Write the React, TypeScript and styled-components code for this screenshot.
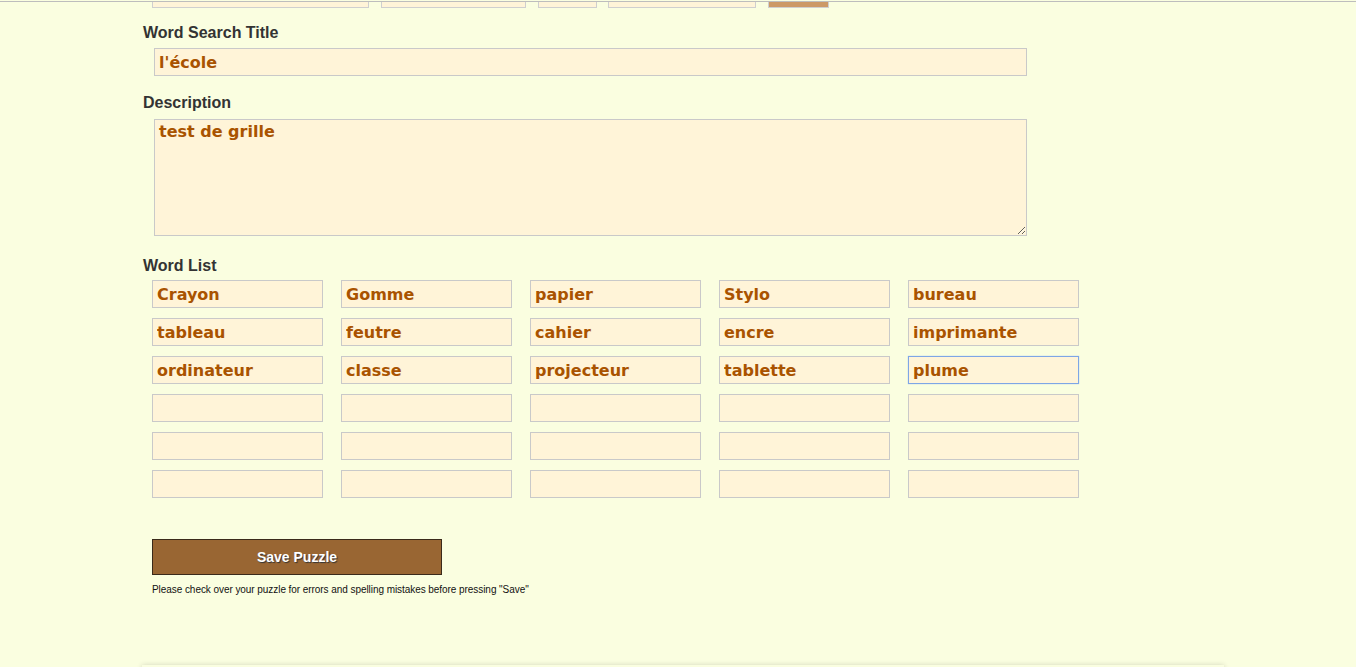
import React from "react";
import styled, { createGlobalStyle } from "styled-components";

const Global = createGlobalStyle`
  html, body { margin: 0; padding: 0; background: #fafee0; }
  body { font-family: "Liberation Sans", Arial, sans-serif; color: #333; overflow: hidden; }
`;

const TopLine = styled.div`
  margin-top: 1px;
  border-top: 1px solid #bdbdbd;
`;

const Page = styled.div`
  padding-left: 143px;
`;

const TopRow = styled.div`
  display: flex;
  padding-left: 9px;
  height: 6px;
`;

const Stub = styled.div<{ $w: number; $ml: number }>`
  width: ${(p) => p.$w}px;
  margin-left: ${(p) => p.$ml}px;
  box-sizing: border-box;
  background: #fff4d8;
  border: 1px solid #cfcfcf;
  border-top: none;
`;

const StubButton = styled.div`
  width: 61px;
  margin-left: 12px;
  box-sizing: border-box;
  background: #cc9966;
  border: 1px solid #cfcfcf;
  border-top: none;
`;

const Label = styled.div<{ $mt: number }>`
  margin-top: ${(p) => p.$mt}px;
  font-size: 16px;
  line-height: 18px;
  font-weight: bold;
  color: #333;
`;

const fieldBase = `
  box-sizing: border-box;
  display: block;
  background: #fff4d8;
  border: 1px solid #c9c9c9;
  color: #a95300;
  font-family: "DejaVu Sans", Verdana, sans-serif;
  font-weight: bold;
  font-size: 16px;
  outline: none;
  margin: 0;
`;

const TitleInput = styled.input`
  ${fieldBase}
  margin-top: 6px;
  margin-left: 11px;
  width: 873px;
  height: 28px;
  padding: 0 4px;
`;

const DescArea = styled.textarea`
  ${fieldBase}
  margin-top: 7px;
  margin-left: 11px;
  width: 873px;
  height: 117px;
  padding: 2px 4px;
  line-height: 20px;
  resize: both;
`;

const WordGrid = styled.div`
  margin-top: 5px;
  margin-left: 9px;
  display: grid;
  grid-template-columns: repeat(5, 171px);
  column-gap: 18px;
  row-gap: 10px;
`;

const WordInput = styled.input<{ $focused?: boolean }>`
  ${fieldBase}
  width: 171px;
  height: 28px;
  padding: 0 4px;
  border-color: ${(p) => (p.$focused ? "#7ea6e6" : "#c9c9c9")};
  box-shadow: ${(p) => (p.$focused ? "0 0 1px #9dbdf0" : "none")};
`;

const SaveButton = styled.button`
  margin-top: 41px;
  margin-left: 9px;
  width: 290px;
  height: 36px;
  background: #996633;
  border: 1px solid #3a2a1a;
  color: #fff;
  font-family: "Liberation Sans", Arial, sans-serif;
  font-weight: bold;
  font-size: 14px;
  text-shadow: 1px 1px 1px #333;
  cursor: pointer;
  display: block;
`;

const Note = styled.div`
  margin-top: 9px;
  margin-left: 9px;
  font-size: 10px;
  line-height: 12px;
  letter-spacing: -0.06px;
  color: #111;
`;

const Panel = styled.div`
  margin-top: 69px;
  margin-left: 142px;
  width: 1082px;
  height: 200px;
  background: #fafee0;
  box-shadow: 0 0 5px rgba(0, 0, 0, 0.16);
`;

const words = [
  "Crayon", "Gomme", "papier", "Stylo", "bureau",
  "tableau", "feutre", "cahier", "encre", "imprimante",
  "ordinateur", "classe", "projecteur", "tablette", "plume",
  "", "", "", "", "",
  "", "", "", "", "",
  "", "", "", "", "",
];

export default function App() {
  return (
    <>
      <Global />
      <TopLine />
      <Page>
        <TopRow>
          <Stub $w={217} $ml={0} />
          <Stub $w={145} $ml={12} />
          <Stub $w={59} $ml={12} />
          <Stub $w={148} $ml={11} />
          <StubButton />
        </TopRow>
        <Label $mt={16}>Word Search Title</Label>
        <TitleInput defaultValue="l'école" />
        <Label $mt={18}>Description</Label>
        <DescArea defaultValue="test de grille" />
        <Label $mt={21}>Word List</Label>
        <WordGrid>
          {words.map((w, i) => (
            <WordInput key={i} defaultValue={w} $focused={i === 14} />
          ))}
        </WordGrid>
        <SaveButton>Save Puzzle</SaveButton>
        <Note>Please check over your puzzle for errors and spelling mistakes before pressing "Save"</Note>
      </Page>
      <Panel />
    </>
  );
}
